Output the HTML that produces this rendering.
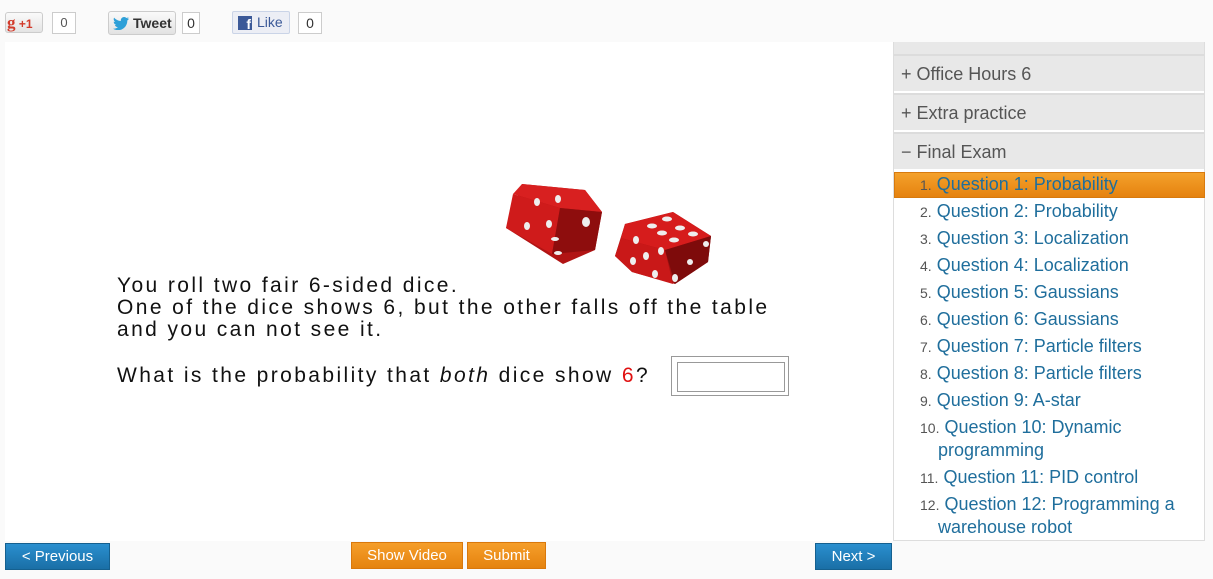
<!DOCTYPE html>
<html><head><style>
body{margin:0;width:1213px;height:579px;background:#fafafa;font-family:"Liberation Sans",sans-serif;position:relative;overflow:hidden}
.a{position:absolute}
.btn{position:absolute;color:#fff;font-size:15px;text-align:center;box-sizing:border-box}
.blue{background:linear-gradient(#2a8fcf,#1a6fa6);border:1px solid #15608f}
.org{background:linear-gradient(#f59e2a,#e5830f);border:1px solid #d9780c}
.side{position:absolute;left:893px;top:42px;width:312px;height:499px;background:#fff;border:1px solid #ddd;box-sizing:border-box}
.hd{position:absolute;left:0;width:310px;height:37px;background:#e8e8e8;border-top:2px solid #dcdcdc;color:#555;font-size:18px;line-height:36px;padding-left:7px;box-sizing:border-box}
.li{position:absolute;left:0;font-size:18px;color:#1f6e9c;white-space:nowrap}
.li span{color:#555;font-size:14px}
.q{position:absolute;left:117px;font-size:21px;letter-spacing:2.4px;color:#111;white-space:nowrap}
</style></head><body>
<div class="a" style="left:5px;top:42px;width:888px;height:499px;background:#fff"></div>

<!-- social -->
<div class="a" style="left:5px;top:12px;width:38px;height:21px;border:1px solid #ccc;border-radius:3px;background:linear-gradient(#fafafa,#e4e4e4);box-sizing:border-box;font-size:12px;color:#d23b2c;font-weight:bold;line-height:20px"><span style="font-family:'Liberation Serif';font-size:17px;margin-left:1px">g</span> +1</div>
<div class="a" style="left:52px;top:12px;width:24px;height:22px;border:1px solid #ccc;background:#fff;box-sizing:border-box;font-size:13px;color:#555;text-align:center;line-height:20px">0</div>
<div class="a" style="left:108px;top:11px;width:68px;height:24px;border:1px solid #ccc;border-radius:3px;background:linear-gradient(#fafafa,#e2e2e2);box-sizing:border-box;font-size:14px;font-weight:bold;color:#333;line-height:22px;padding-left:24px">Tweet<svg class="a" style="left:4px;top:5px" width="16" height="13" viewBox="0 0 16 13"><path d="M16 1.5c-.6.3-1.2.4-1.9.5.7-.4 1.2-1 1.4-1.8-.6.4-1.3.6-2.1.8C12.8.4 12 0 11.1 0 9.300 0 7.8 1.5 7.8 3.3c0 .3 0 .5.1.7C5.2 3.9 2.8 2.6 1.1.6.8 1.1.7 1.6.7 2.3c0 1.1.6 2.1 1.5 2.7-.5 0-1-.2-1.5-.4 0 1.6 1.1 2.9 2.6 3.2-.5.1-1 .2-1.5.1.4 1.3 1.6 2.3 3.1 2.3C3.7 11.1 2 11.7.2 11.7H0c1.5.9 3.2 1.5 5 1.5 6 0 9.3-5 9.3-9.3v-.4c.7-.5 1.2-1.1 1.7-1.8z" fill="#2ea0d8"/></svg></div>
<div class="a" style="left:182px;top:12px;width:18px;height:22px;border:1px solid #ccc;background:#fff;box-sizing:border-box;font-size:14px;color:#333;text-align:center;line-height:20px">0</div>
<div class="a" style="left:232px;top:11px;width:58px;height:23px;border:1px solid #cad4e7;border-radius:2px;background:#eceef5;box-sizing:border-box;font-size:14px;color:#3b5998;line-height:21px;padding-left:24px">Like<div class="a" style="left:5px;top:4px;width:14px;height:14px;background:#3b5998;color:#fff;font-weight:bold;font-size:14px;line-height:17px;text-align:right;padding-right:1px;box-sizing:border-box">f</div></div>
<div class="a" style="left:298px;top:12px;width:24px;height:22px;border:1px solid #ccc;background:#fff;box-sizing:border-box;font-size:14px;color:#333;text-align:center;line-height:20px">0</div>

<!-- dice -->
<svg class="a" style="left:500px;top:184px" width="220" height="100">
<polygon points="22,0 85,6 102,28 95,66 63,80 6,44" fill="#b11414"/>
<polygon points="22,0 85,6 102,28 60,24 13,10" fill="#d82020"/>
<polygon points="13,10 60,24 52,70 6,44" fill="#cf1b1b"/>
<polygon points="60,24 102,28 95,66 52,70" fill="#8e0d0d"/>
<g fill="#eee"><ellipse cx="37" cy="18" rx="3" ry="4"/><ellipse cx="58" cy="15" rx="3" ry="4"/><ellipse cx="27" cy="42" rx="3" ry="4"/><ellipse cx="49" cy="40" rx="3" ry="4"/><ellipse cx="86" cy="38" rx="4" ry="5"/><ellipse cx="55" cy="55" rx="4" ry="2"/><ellipse cx="58" cy="69" rx="4" ry="2"/></g>
<polygon points="125,40 173,28 211,52 208,78 175,100 132,88 115,72" fill="#a51212"/>
<polygon points="125,40 173,28 211,52 165,66 121,54" fill="#d61c1c"/>
<polygon points="121,54 165,66 173,100 132,88 115,72" fill="#c91818"/>
<polygon points="165,66 211,52 208,78 175,100" fill="#7e0b0b"/>
<g fill="#eee"><ellipse cx="152" cy="42" rx="5" ry="2.5"/><ellipse cx="167" cy="35" rx="5" ry="2.5"/><ellipse cx="162" cy="49" rx="5" ry="2.5"/><ellipse cx="180" cy="44" rx="5" ry="2.5"/><ellipse cx="174" cy="56" rx="5" ry="2.5"/><ellipse cx="193" cy="50" rx="5" ry="2.5"/><ellipse cx="136" cy="56" rx="3" ry="4"/><ellipse cx="146" cy="72" rx="3" ry="4"/><ellipse cx="161" cy="67" rx="3" ry="4"/><ellipse cx="133" cy="77" rx="3" ry="4"/><ellipse cx="155" cy="90" rx="3" ry="4"/><ellipse cx="175" cy="94" rx="3" ry="4"/><ellipse cx="190" cy="78" rx="3" ry="3"/><ellipse cx="206" cy="60" rx="3" ry="3"/></g>
</svg>

<div class="q" style="top:274px">You roll two fair 6-sided dice.</div>
<div class="q" style="top:296px">One of the dice shows 6, but the other falls off the table</div>
<div class="q" style="top:318px">and you can not see it.</div>
<div class="q" style="top:364px">What is the probability that <i>both</i> dice show <span style="color:#e01010">6</span>?</div>
<div class="a" style="left:671px;top:356px;width:118px;height:40px;border:1px solid #999;box-sizing:border-box;background:#fff"><div class="a" style="left:5px;top:5px;width:106px;height:28px;border:1px solid #999"></div></div>

<!-- buttons -->
<div class="btn blue" style="left:5px;top:543px;width:105px;height:27px;line-height:26px">&lt; Previous</div>
<div class="btn org" style="left:351px;top:542px;width:112px;height:27px;line-height:26px">Show Video</div>
<div class="btn org" style="left:467px;top:542px;width:79px;height:27px;line-height:26px">Submit</div>
<div class="btn blue" style="left:815px;top:543px;width:77px;height:27px;line-height:26px">Next &gt;</div>

<!-- sidebar -->
<div class="side">
<div class="hd" style="top:-1px;height:13px;border-top:none"></div>
<div class="hd" style="top:11px">+ Office Hours 6</div>
<div class="hd" style="top:50px">+ Extra practice</div>
<div class="hd" style="top:89px">− Final Exam</div>
<div class="a" style="left:0;top:129px;width:311px;height:26px;background:linear-gradient(#f4a12b,#e5820f);border:1px solid #d77a0e;box-sizing:border-box"></div>
<div class="li" style="top:131px;left:26px"><span>1.</span> Question 1: Probability</div>
<div class="li" style="top:158px;left:26px"><span>2.</span> Question 2: Probability</div>
<div class="li" style="top:185px;left:26px"><span>3.</span> Question 3: Localization</div>
<div class="li" style="top:212px;left:26px"><span>4.</span> Question 4: Localization</div>
<div class="li" style="top:239px;left:26px"><span>5.</span> Question 5: Gaussians</div>
<div class="li" style="top:266px;left:26px"><span>6.</span> Question 6: Gaussians</div>
<div class="li" style="top:293px;left:26px"><span>7.</span> Question 7: Particle filters</div>
<div class="li" style="top:320px;left:26px"><span>8.</span> Question 8: Particle filters</div>
<div class="li" style="top:347px;left:26px"><span>9.</span> Question 9: A-star</div>
<div class="li" style="top:374px;left:26px"><span>10.</span> Question 10: Dynamic</div>
<div class="li" style="top:397px;left:44px">programming</div>
<div class="li" style="top:424px;left:26px"><span>11.</span> Question 11: PID control</div>
<div class="li" style="top:451px;left:26px"><span>12.</span> Question 12: Programming a</div>
<div class="li" style="top:474px;left:44px">warehouse robot</div>
</div>
</body></html>
